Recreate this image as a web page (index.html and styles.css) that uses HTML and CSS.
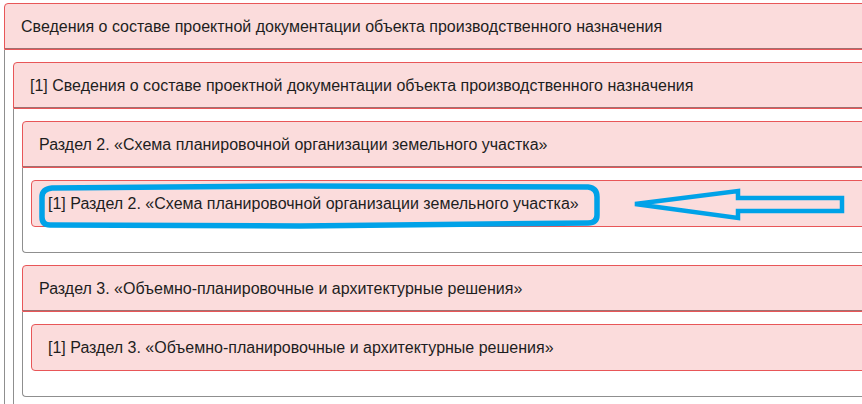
FILE: index.html
```html
<!DOCTYPE html>
<html lang="ru">
<head>
<meta charset="utf-8">
<title>Сведения о составе проектной документации</title>
<link rel="stylesheet" href="styles.css">
</head>
<body>
<div class="page">
  <div class="panel root">
    <div class="heading">Сведения о составе проектной документации объекта производственного назначения</div>
    <div class="body open">
      <div class="panel">
        <div class="heading">[1] Сведения о составе проектной документации объекта производственного назначения</div>
        <div class="body open">
          <div class="panel">
            <div class="heading">Раздел 2. «Схема планировочной организации земельного участка»</div>
            <div class="body closed">
              <div class="heading solo">[1] Раздел 2. «Схема планировочной организации земельного участка»</div>
            </div>
          </div>
          <div class="panel">
            <div class="heading">Раздел 3. «Объемно-планировочные и архитектурные решения»</div>
            <div class="body closed">
              <div class="heading solo">[1] Раздел 3. «Объемно-планировочные и архитектурные решения»</div>
            </div>
          </div>
        </div>
      </div>
    </div>
  </div>
  <svg class="annot" width="862" height="404" viewBox="0 0 862 404">
    <path d="M52,188 L300,186 L588,187 Q597,188 597,197 L597,215 Q597,223 588,223 L300,226 L50,225 Q42,225 42,217 L42,197 Q42,189 52,188 Z" fill="none" stroke="#00a2e8" stroke-width="5.5"/>
    <polygon points="635,204 738,191 738,198 842,198 842,211 738,211 738,218" fill="none" stroke="#00a2e8" stroke-width="4.5" stroke-linejoin="miter"/>
  </svg>
</div>
</body>
</html>
```
FILE: styles.css
```css
html, body {
  margin: 0;
  padding: 0;
  overflow: hidden;
  background: #ffffff;
}
.page {
  position: relative;
  box-sizing: border-box;
  padding: 3px 0 0 4px;
  width: 862px;
  height: 404px;
  overflow: hidden;
  font-family: "Liberation Sans", Arial, sans-serif;
  font-size: 16px;
  color: #1e1e1e;
}
.panel {
  display: flex;
  flex-direction: column;
}
.panel.root {
  width: 920px;
}
.panel + .panel {
  margin-top: 12px;
}
.heading {
  box-sizing: border-box;
  height: 47px;
  display: flex;
  align-items: center;
  padding: 1px 16px 0;
  background: #fbdcdc;
  border: 1px solid #e85658;
  border-radius: 4px 4px 0 0;
  box-shadow: inset 0 -1px 0 #a07070;
  white-space: nowrap;
}
.heading.solo {
  border-radius: 4px;
  box-shadow: none;
}
.body {
  border-left: 1px solid #8f8f8f;
  padding: 12px 8px 0 8px;
}
.body.open {
  height: 500px;
}
.body.closed {
  padding-bottom: 25px;
  border-bottom: 1px solid #8f8f8f;
  border-radius: 0 0 0 4px;
}
.annot {
  position: absolute;
  left: 0;
  top: 0;
}
```
